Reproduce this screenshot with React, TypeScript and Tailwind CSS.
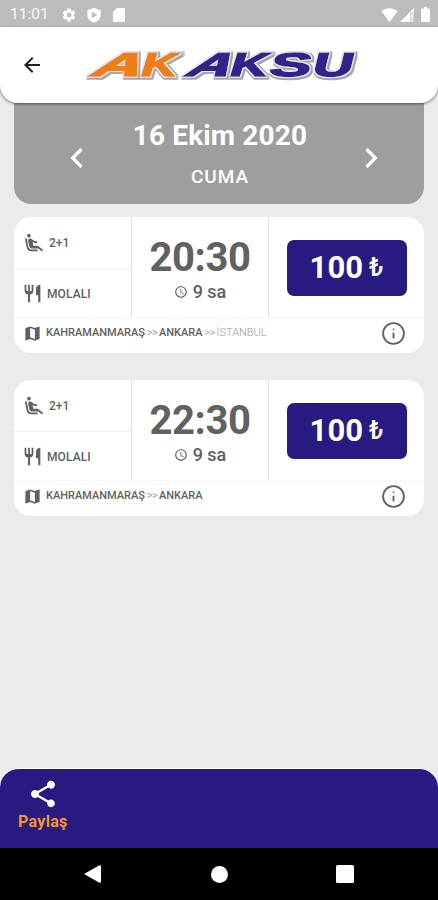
import { Info } from "lucide-react";
import {
  MdAccessTime,
  MdAirlineSeatReclineExtra,
  MdArrowBack,
  MdChevronLeft,
  MdChevronRight,
  MdMap,
  MdRestaurant,
  MdSettings,
  MdShare,
} from "react-icons/md";

interface Trip {
  time: string;
  duration: string;
  seats: string;
  stopInfo: string;
  price: string;
  route: string[];
  next?: string;
}

const trips: Trip[] = [
  {
    time: "20:30",
    duration: "9 sa",
    seats: "2+1",
    stopInfo: "MOLALI",
    price: "100",
    route: ["KAHRAMANMARAŞ", "ANKARA"],
    next: "İSTANBUL",
  },
  {
    time: "22:30",
    duration: "9 sa",
    seats: "2+1",
    stopInfo: "MOLALI",
    price: "100",
    route: ["KAHRAMANMARAŞ", "ANKARA"],
  },
];

// every letter of the wordmark has its own width and slant
const logoLetters = [
  { char: "A", x: 3, width: 49, skew: -38, color: "#ee7f14" },
  { char: "K", x: 54, width: 35, skew: -17, color: "#ee7f14" },
  { char: "A", x: 98, width: 43, skew: -40, color: "#33218b" },
  { char: "K", x: 143, width: 37, skew: -17, color: "#33218b" },
  { char: "S", x: 183, width: 41, skew: -14, color: "#33218b" },
  { char: "U", x: 226, width: 40, skew: -14, color: "#33218b" },
];

function StatusBar() {
  return (
    <div className="flex h-[27px] shrink-0 items-center bg-[#bdbdbd] pt-0.5 pr-[8px] pl-[10px] text-white">
      <span className="w-[50px] text-[15.5px] leading-none text-white/90">11:01</span>
      <MdSettings className="ml-[1px] h-4 w-4" />
      <svg viewBox="0 0 24 24" className="ml-[9px] h-4 w-4" fill="currentColor">
        <path
          fillRule="evenodd"
          d="M12 1 2 5v7c0 5.500 4 9.500 10 11.500 6-2 10-6 10-11.500V5L12 1Zm-3 6 8 5-8 5V7Z"
        />
      </svg>
      <svg viewBox="0 0 12 14" className="ml-[11px] h-[14px] w-[12px]" fill="currentColor">
        <path d="M4 0h7a1 1 0 0 1 1 1v12a1 1 0 0 1-1 1H1a1 1 0 0 1-1-1V4l4-4Z" />
      </svg>
      <svg viewBox="0 0 16 14" className="ml-auto h-[14px] w-[17px]" fill="currentColor">
        <path d="M8 14 0 3.200C4.500-.8 11.500-.8 16 3.200L8 14Z" />
      </svg>
      <svg viewBox="0 0 14 14" className="ml-[2px] h-[14px] w-[14px]" fill="currentColor">
        <path d="M14 0v4h-4v10H0L14 0Z" />
        <path d="M11.500 5.500h1.200v5h-1.200zM11.500 12h1.200v1.500h-1.200z" />
        <path d="M10 4h4v10h-4z" opacity=".4" />
      </svg>
      <svg viewBox="0 0 9 15" className="ml-[7px] h-[15px] w-[9px]" fill="currentColor">
        <path d="M3 0h3v1.500h2a1 1 0 0 1 1 1V14a1 1 0 0 1-1 1H1a1 1 0 0 1-1-1V2.500a1 1 0 0 1 1-1h2V0Z" />
      </svg>
    </div>
  );
}

function Logo() {
  return (
    <svg
      viewBox="0 0 290 50"
      className="h-[50px] w-[290px] overflow-visible"
      role="img"
      aria-label="AK AKSU"
      fontFamily="'Liberation Sans', sans-serif"
      fontWeight="700"
      fontSize="33"
    >
      <defs>
        <filter id="silver-edge" x="-10%" y="-20%" width="120%" height="150%">
          <feMorphology in="SourceAlpha" operator="dilate" radius="1" result="gap" />
          <feMorphology in="SourceAlpha" operator="dilate" radius="2" result="wide" />
          <feOffset in="wide" dx="0.8" dy="0.6" result="edge" />
          <feFlood floodColor="#a6a6aa" />
          <feComposite in2="edge" operator="in" result="silver" />
          <feFlood floodColor="#ececf0" />
          <feComposite in2="gap" operator="in" result="white" />
          <feMerge>
            <feMergeNode in="silver" />
            <feMergeNode in="white" />
            <feMergeNode in="SourceGraphic" />
          </feMerge>
        </filter>
      </defs>
      <g filter="url(#silver-edge)" strokeWidth="1.600">
        {logoLetters.map((l) => (
          <text
            key={l.x}
            transform={`translate(${l.x} 36) skewX(${l.skew})`}
            textLength={l.width}
            lengthAdjust="spacingAndGlyphs"
            fill={l.color}
            stroke={l.color}
          >
            {l.char}
          </text>
        ))}
      </g>
    </svg>
  );
}

function Header() {
  return (
    <header className="relative z-10 flex h-[76px] shrink-0 items-center rounded-b-[18px] bg-white pl-5 shadow-[0_1px_3px_rgba(0,0,0,0.5)]">
      <MdArrowBack className="h-6 w-6 text-[#222]" />
      <div className="ml-[41px]">
        <Logo />
      </div>
    </header>
  );
}

function DatePicker() {
  return (
    <section className="mx-[14px] flex h-[101px] shrink-0 items-center justify-between rounded-b-[17px] bg-[#9e9e9e] pr-[33px] pl-[43px] text-white">
      <MdChevronLeft className="mt-2 h-10 w-10" />
      <div className="flex flex-col items-center pt-px pr-[8px]">
        <div className="text-[28px] leading-8 font-bold tracking-[0.15px]">16 Ekim 2020</div>
        <div className="mt-[13px] text-[19px] leading-6 font-medium tracking-[1px]">CUMA</div>
      </div>
      <MdChevronRight className="mt-2 h-10 w-10" />
    </section>
  );
}

function TripCard({ trip }: { trip: Trip }) {
  return (
    <article className="flex h-[136px] w-full flex-col overflow-hidden rounded-[17px] bg-white text-[#616161]">
      <div className="flex h-[101px] border-b border-[#f7f7f7]">
        <div className="flex w-[118px] flex-col border-r border-[#e0e0e0] text-xs font-medium">
          <div className="flex h-[52px] items-center border-b border-[#f0f0f0] pl-[9px]">
            <MdAirlineSeatReclineExtra className="h-[22px] w-[22px]" />
            <span className="ml-[4px]">{trip.seats}</span>
          </div>
          <div className="flex flex-1 items-center pt-px pl-[8px]">
            <MdRestaurant className="h-[21px] w-[21px]" />
            <span className="ml-[4px] tracking-[0.1px]">{trip.stopInfo}</span>
          </div>
        </div>
        <div className="flex w-[137px] flex-col items-center border-r border-[#e0e0e0] pt-[18px]">
          <div className="text-[40px] leading-[46px] font-bold tracking-[-0.4px]">{trip.time}</div>
          <div className="flex items-center text-[18px] leading-[21px] font-medium">
            <MdAccessTime className="mr-[5px] h-[14px] w-[14px]" />
            {trip.duration}
          </div>
        </div>
        <div className="flex flex-1 items-center justify-center pt-px">
          <button className="flex h-[56px] w-[120px] items-center justify-center rounded-[7px] bg-[#271a80] pt-px text-[31px] font-bold text-white">
            {trip.price}
            <span className="ml-[6px] text-[25px] font-medium">₺</span>
          </button>
        </div>
      </div>
      <div className="flex flex-1 items-center pr-[18px] pb-[5px] pl-[9px]">
        <MdMap className="h-[19px] w-[19px]" />
        <div className="ml-[4px] flex pt-px text-[11px] font-medium">
          <span>{trip.route[0]}</span>
          <span className="w-[14px] text-center font-normal tracking-[-0.5px] text-[#999]">&gt;&gt;</span>
          <span>{trip.route[1]}</span>
          {trip.next && (
            <>
              <span className="w-[14px] text-center font-normal tracking-[-0.5px] text-[#aaa]">&gt;&gt;</span>
              <span className="font-light text-[#999]">{trip.next}</span>
            </>
          )}
        </div>
        <Info className="ml-auto h-[25px] w-[25px]" strokeWidth={1.8} />
      </div>
    </article>
  );
}

function Footer() {
  return (
    <footer className="flex h-[80px] shrink-0 rounded-t-[19px] border-t border-white bg-[#271a80]">
      <button className="ml-[18px] flex flex-col items-center pt-[9px]">
        <MdShare className="h-8 w-8 text-white" />
        <span className="mt-[2px] text-base leading-5 font-bold tracking-[0.3px] text-[#f39431]">Paylaş</span>
      </button>
    </footer>
  );
}

function NavBar() {
  return (
    <nav className="flex h-[52px] shrink-0 items-center bg-black pl-[84px]">
      <svg viewBox="0 0 17 18" className="h-[18px] w-[17px]" fill="white">
        <path d="M0 9 15 .5Q17-.3 17 1.500v15q0 1.800-2 1L0 9Z" />
      </svg>
      <div className="ml-[110px] h-[17px] w-[17px] rounded-full bg-white" />
      <div className="ml-[108px] h-[18px] w-[18px] rounded-[1.500px] bg-white" />
    </nav>
  );
}

export default function App() {
  return (
    <div className="flex h-[900px] w-[438px] flex-col overflow-hidden bg-[#ebebeb] font-[Roboto,sans-serif]">
      <StatusBar />
      <Header />
      <DatePicker />
      <main className="flex flex-1 flex-col gap-[27px] px-[14px] pt-[13px]">
        {trips.map((trip) => (
          <TripCard key={trip.time} trip={trip} />
        ))}
      </main>
      <Footer />
      <NavBar />
    </div>
  );
}
